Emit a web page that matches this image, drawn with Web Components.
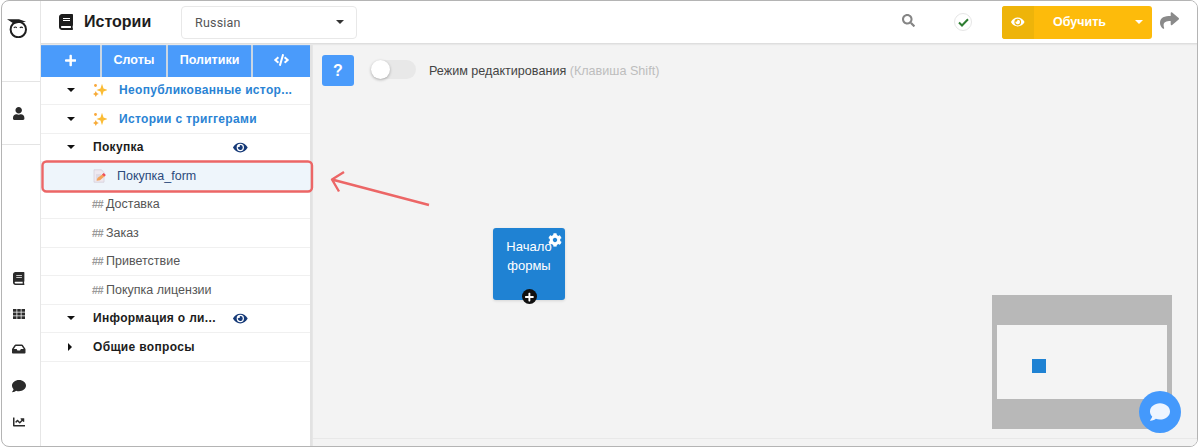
<!DOCTYPE html>
<html lang="ru">
<head>
<meta charset="utf-8">
<title>Истории</title>
<style>
  html, body { margin: 0; height: 100%; background: #fff; }
  body { font-family: "Liberation Sans", Arial, sans-serif; }
</style>
</head>
<body>
<story-app>
  <app-rail slot="rail"></app-rail>
  <app-topbar slot="top"></app-topbar>
  <story-sidebar slot="side">
    <story-row kind="group" open sparkle accent>Неопубликованные истор...</story-row>
    <story-row kind="group" open sparkle accent>Истории с триггерами</story-row>
    <story-row kind="group" open eye>Покупка</story-row>
    <story-row kind="form">Покупка_form</story-row>
    <story-row kind="story">Доставка</story-row>
    <story-row kind="story">Заказ</story-row>
    <story-row kind="story">Приветствие</story-row>
    <story-row kind="story">Покупка лицензии</story-row>
    <story-row kind="group" open eye>Информация о ли...</story-row>
    <story-row kind="group">Общие вопросы</story-row>
  </story-sidebar>
  <story-canvas slot="main"></story-canvas>
</story-app>
<script>
// icon paths, all font-awesome shaped
const ICONS = {
  book: ['0 0 448 512', 'M448 360V24c0-13.3-10.7-24-24-24H96C43 0 0 43 0 96v320c0 53 43 96 96 96h328c13.3 0 24-10.7 24-24v-16c0-7.5-3.5-14.3-8.9-18.7-4.2-15.4-4.2-59.3 0-74.7 5.4-4.3 8.9-11.1 8.9-18.6zM128 134c0-3.3 2.7-6 6-6h212c3.3 0 6 2.7 6 6v20c0 3.3-2.7 6-6 6H134c-3.3 0-6-2.7-6-6v-20zm0 64c0-3.3 2.7-6 6-6h212c3.3 0 6 2.7 6 6v20c0 3.3-2.7 6-6 6H134c-3.3 0-6-2.7-6-6v-20zm253.4 250H96c-17.7 0-32-14.3-32-32 0-17.6 14.4-32 32-32h285.4c-1.9 17.1-1.9 46.9 0 64z'],
  eye: ['0 0 576 512', 'M572.52 241.4C518.29 135.59 410.93 64 288 64S57.68 135.64 3.48 241.41a32.35 32.35 0 0 0 0 29.19C57.71 376.41 165.07 448 288 448s230.32-71.64 284.52-177.41a32.35 32.35 0 0 0 0-29.19zM288 400a144 144 0 1 1 144-144 143.93 143.93 0 0 1-144 144zm0-240a95.31 95.31 0 0 0-25.31 3.79 47.85 47.85 0 0 1-66.9 66.9A95.78 95.78 0 1 0 288 160z'],
  search: ['0 0 512 512', 'M505 442.7L405.3 343c-4.5-4.5-10.6-7-17-7H372c27.6-35.3 44-79.7 44-128C416 93.1 322.9 0 208 0S0 93.1 0 208s93.1 208 208 208c48.3 0 92.7-16.4 128-44v16.3c0 6.4 2.5 12.5 7 17l99.7 99.7c9.4 9.4 24.6 9.4 33.9 0l28.3-28.3c9.4-9.4 9.4-24.6.1-34zM208 336c-70.7 0-128-57.2-128-128 0-70.7 57.2-128 128-128 70.7 0 128 57.2 128 128 0 70.7-57.2 128-128 128z'],
  user: ['0 0 448 512', 'M224 256c70.7 0 128-57.3 128-128S294.7 0 224 0 96 57.3 96 128s57.3 128 128 128zm89.6 32h-16.7c-22.2 10.2-46.9 16-72.9 16s-50.6-5.8-72.9-16h-16.7C60.2 288 0 348.2 0 422.4V464c0 26.5 21.5 48 48 48h352c26.5 0 48-21.5 48-48v-41.6c0-74.2-60.2-134.4-134.4-134.4z'],
  inbox: ['0 0 576 512', 'M567.938 243.908L462.25 85.374A48.003 48.003 0 0 0 422.311 64H153.689a48 48 0 0 0-39.938 21.374L8.062 243.908A47.994 47.994 0 0 0 0 270.533V400c0 26.51 21.49 48 48 48h480c26.51 0 48-21.49 48-48V270.533a47.994 47.994 0 0 0-8.062-26.625zM162.252 128h251.497l85.333 128H376l-32 64H232l-32-64H76.918l85.334-128z'],
  comment: ['0 0 512 512', 'M256 32C114.6 32 0 125.1 0 240c0 49.6 21.4 95 57 130.7C44.5 421.1 2.7 466 2.2 466.5c-2.2 2.3-2.8 5.7-1.5 8.7S4.8 480 8 480c66.3 0 116-31.8 140.6-51.4 32.7 12.3 69 19.4 107.4 19.4 141.4 0 256-93.1 256-208S397.4 32 256 32z'],
  chart: ['0 0 512 512', 'M496 384H64V80c0-8.84-7.16-16-16-16H16C7.16 64 0 71.16 0 80v336c0 17.67 14.33 32 32 32h464c8.84 0 16-7.16 16-16v-32c0-8.84-7.16-16-16-16zM464 96H345.94c-21.38 0-32.09 25.85-16.97 40.97l32.4 32.4L288 242.75l-73.37-73.37c-12.5-12.5-32.76-12.5-45.25 0l-68.69 68.69c-6.25 6.25-6.25 16.38 0 22.63l22.62 22.62c6.25 6.25 16.38 6.25 22.63 0L192 237.25l73.37 73.37c12.5 12.5 32.76 12.5 45.25 0l96-96 32.4 32.4c15.12 15.12 40.97 4.41 40.97-16.97V112c.01-8.84-7.15-16-15.99-16z'],
  cog: ['0 0 512 512', 'M487.4 315.7l-42.6-24.6c4.3-23.2 4.3-47 0-70.2l42.6-24.6c4.9-2.8 7.1-8.6 5.5-14-11.1-35.6-30-67.8-54.7-94.6-3.8-4.1-10-5.1-14.8-2.3L380.8 110c-17.9-15.4-38.5-27.3-60.8-35.1V25.8c0-5.6-3.9-10.5-9.4-11.7-36.7-8.2-74.3-7.8-109.2 0-5.5 1.2-9.4 6.1-9.4 11.7V75c-22.2 7.9-42.8 19.8-60.8 35.1L88.7 85.5c-4.9-2.8-11-1.9-14.8 2.3-24.7 26.7-43.6 58.9-54.7 94.6-1.7 5.4.6 11.2 5.5 14L67.3 221c-4.3 23.2-4.3 47 0 70.2l-42.6 24.6c-4.9 2.8-7.1 8.6-5.5 14 11.1 35.6 30 67.8 54.7 94.6 3.8 4.1 10 5.1 14.8 2.3l42.6-24.6c17.9 15.4 38.5 27.3 60.8 35.1v49.2c0 5.6 3.9 10.5 9.4 11.7 36.7 8.2 74.3 7.8 109.2 0 5.5-1.2 9.4-6.1 9.4-11.7v-49.2c22.2-7.9 42.8-19.8 60.8-35.1l42.6 24.6c4.9 2.8 11 1.9 14.8-2.3 24.7-26.7 43.6-58.9 54.7-94.6 1.5-5.5-.7-11.3-5.6-14.1zM256 336c-44.1 0-80-35.9-80-80s35.9-80 80-80 80 35.9 80 80-35.9 80-80 80z'],
  share: ['0 0 512 512', 'M503.691 189.836L327.687 37.851C312.281 24.546 288 35.347 288 56.015v80.053C127.371 137.907 0 170.1 0 322.326c0 61.441 39.581 122.309 83.333 154.132 13.653 9.931 33.111-2.533 28.077-18.631C66.066 312.814 132.917 274.316 288 272.085V360c0 20.7 24.3 31.453 39.687 18.164l176.004-152c11.071-9.562 11.086-26.753 0-36.328z'],
  plus: ['0 0 448 512', 'M416 208H272V64c0-17.67-14.33-32-32-32h-32c-17.67 0-32 14.33-32 32v144H32c-17.67 0-32 14.33-32 32v32c0 17.67 14.33 32 32 32h144v144c0 17.67 14.33 32 32 32h32c17.67 0 32-14.33 32-32V304h144c17.67 0 32-14.33 32-32v-32c0-17.67-14.33-32-32-32z'],
  code: ['0 0 640 512', 'M278.9 511.5l-61-17.7c-6.4-1.8-10-8.5-8.2-14.9L346.2 8.7c1.8-6.4 8.5-10.1 14.9-8.2l61 17.7c6.4 1.8 10 8.5 8.2 14.9L293.8 503.3c-1.9 6.4-8.5 10.1-14.9 8.2zm-114-112.2l43.5-46.4c4.6-4.9 4.3-12.7-.8-17.2L117 256l90.6-79.7c5.1-4.5 5.5-12.3.8-17.2l-43.5-46.4c-4.5-4.8-12.1-5.1-17-.5L3.8 247.2c-5.1 4.7-5.1 12.8 0 17.5l144.1 135.1c4.9 4.6 12.5 4.4 17-.5zm327.2.6l144.1-135.1c5.1-4.7 5.1-12.8 0-17.5L492.1 112.1c-4.8-4.5-12.4-4.3-17 .5L431.6 159c-4.6 4.9-4.3 12.7.8 17.2L523 256l-90.6 79.7c-5.1 4.5-5.5 12.3-.8 17.2l43.5 46.4c4.5 4.9 12.1 5.1 17 .6z'],
  grid: ['0 0 512 512', 'M0 40h150v120H0zM181 40h150v120H181zM362 40h150v120H362zM0 196h150v120H0zM181 196h150v120H181zM362 196h150v120H362zM0 352h150v120H0zM181 352h150v120H181zM362 352h150v120H362z'],
};

class AppIcon extends HTMLElement {
  connectedCallback() {
    const [box, d] = ICONS[this.getAttribute('name')];
    const size = this.getAttribute('size') || 14;
    this.attachShadow({ mode: 'open' }).innerHTML = `
      <style>
        :host { display: inline-flex; line-height: 0; color: inherit; }
        svg { height: ${size}px; width: auto; display: block; fill: currentColor; }
      </style>
      <svg viewBox="${box}"><path d="${d}"/></svg>`;
  }
}
customElements.define('app-icon', AppIcon);

class StoryApp extends HTMLElement {
  constructor() {
    super();
    this.attachShadow({ mode: 'open' }).innerHTML = `
      <style>
        :host {
          display: block;
          margin-left: 1px;
          width: 1197px;
          height: 447px;
          box-sizing: border-box;
          border: 1px solid #b4b4b4;
          border-radius: 8px;
          overflow: hidden;
          position: relative;
          background: #fff;
        }
        .layout {
          display: grid;
          grid-template-columns: 39px 271px 1fr;
          grid-template-rows: 43px 1fr;
          height: 100%;
        }
        ::slotted([slot="rail"]) { grid-row: 1 / 3; }
        ::slotted([slot="top"]) { grid-column: 2 / 4; }
      </style>
      <div class="layout">
        <slot name="rail"></slot>
        <slot name="top"></slot>
        <slot name="side"></slot>
        <slot name="main"></slot>
      </div>
      <svg style="position:absolute;left:-2px;top:-1px;pointer-events:none" width="1198" height="447" fill="none" stroke="#ec6666" stroke-width="2.4">
        <rect x="42.5" y="161.5" width="269.5" height="30" rx="4"/>
        <path d="M429 205L332 179.5M344 172L332 179.5L339 191.5" stroke-linejoin="round"/>
      </svg>`;
  }
}
customElements.define('story-app', StoryApp);

class AppRail extends HTMLElement {
  constructor() {
    super();
    this.attachShadow({ mode: 'open' }).innerHTML = `
      <style>
        :host {
          display: flex;
          flex-direction: column;
          align-items: stretch;
          border-right: 1px solid #e6e6e6;
          color: #2b2b2b;
        }
        .logo { height: 81px; box-sizing: border-box; padding: 17px 0 0 5px; border-bottom: 1px solid #e4e4e4; }
        .user { height: 63px; box-sizing: border-box; display: flex; align-items: center; justify-content: center; border-bottom: 1px solid #e4e4e4; padding-right: 4px; }
        .bottom { margin-top: auto; display: flex; flex-direction: column; align-items: center; gap: 23.3px; padding: 0 4px 18px 0; }
        svg { display: block; }
      </style>
      <div class="logo">
        <svg width="21" height="20" viewBox="0 0 21 20" fill="none" stroke="#1f1f1f">
          <circle cx="11.300" cy="11.500" r="7.700" stroke-width="2"/>
          <path d="M0 1.200h12l7 2.500-12 2z" fill="#1f1f1f" stroke="none"/>
          <path d="M6.800 9.800q1.500-1.500 3 0M12.800 9.800q1.500-1.500 3 0" stroke-width="1.100"/>
        </svg>
      </div>
      <div class="user"><app-icon name="user" size="13"></app-icon></div>
      <div class="bottom">
        <app-icon name="book" size="13"></app-icon>
        <app-icon name="grid" size="12"></app-icon>
        <app-icon name="inbox" size="12"></app-icon>
        <app-icon name="comment" size="14"></app-icon>
        <app-icon name="chart" size="12"></app-icon>
      </div>`;
  }
}
customElements.define('app-rail', AppRail);

class AppTopbar extends HTMLElement {
  constructor() {
    super();
    this.attachShadow({ mode: 'open' }).innerHTML = `
      <style>
        :host {
          display: flex;
          align-items: center;
          height: 43px;
          box-sizing: border-box;
          border-bottom: 1px solid #dedede;
          box-shadow: 0 1px 1px #e8e8e8;
          z-index: 2;
          background: #fff;
          padding-left: 18px;
        }
        .title { display: flex; align-items: center; gap: 11px; width: 122px; color: #1d1d1d; font: 700 16px "Liberation Sans", Arial, sans-serif; }
        .select {
          width: 176px; height: 33px; box-sizing: border-box;
          border: 1px solid #e8e8e8; border-radius: 4px;
          display: flex; align-items: center; justify-content: space-between;
          padding: 0 12px 0 13px;
          font: 400 12.5px Roboto, sans-serif; letter-spacing: .2px; color: #555;
        }
        .caret { width: 0; height: 0; border: 4px solid transparent; border-top-color: #333; border-bottom: 0; }
        .tools { margin-left: auto; display: flex; align-items: center; }
        .search { color: #858585; margin-right: 39px; }
        .check {
          width: 18px; height: 18px; border-radius: 50%; border: 1px solid #e6e6e6;
          display: flex; align-items: center; justify-content: center; margin-right: 30px; box-sizing: border-box;
        }
        .train {
          width: 150px; height: 33px; border-radius: 3px; overflow: hidden;
          display: flex; align-items: center; background: #fdbb0b; color: #fff;
          font: 700 12.5px "Liberation Sans", Arial, sans-serif;
        }
        .train .view { width: 32px; height: 100%; background: #eeb40a; display: flex; align-items: center; justify-content: center; }
        .train .label { flex: 1; text-align: center; padding-right: 2px; }
        .train .caret { border-top-color: #fff; margin-right: 9px; margin-left: 8px; }
        .share { color: #8a8a8a; margin: 0 18px 0 8px; }
      </style>
      <div class="title"><app-icon name="book" size="16"></app-icon><span>Истории</span></div>
      <div class="select"><span>Russian</span><i class="caret"></i></div>
      <div class="tools">
        <span class="search"><app-icon name="search" size="13"></app-icon></span>
        <span class="check">
          <svg width="11" height="9" viewBox="0 0 11 9" fill="none" stroke="#2e7d32" stroke-width="2"><path d="M1 4.500L4 7.500 10 1.200"/></svg>
        </span>
        <div class="train">
          <span class="view"><app-icon name="eye" size="12"></app-icon></span>
          <span class="label">Обучить</span>
          <i class="caret"></i>
        </div>
        <span class="share"><app-icon name="share" size="19"></app-icon></span>
      </div>`;
  }
}
customElements.define('app-topbar', AppTopbar);

class StorySidebar extends HTMLElement {
  constructor() {
    super();
    this.attachShadow({ mode: 'open' }).innerHTML = `
      <style>
        :host {
          display: flex;
          flex-direction: column;
          border-right: 2px solid #e2e2e2;
          background: #fff;
          min-height: 0;
        }
        .tools {
          display: grid;
          grid-template-columns: 61px 66px 85px 1fr;
          height: 32.7px;
          flex: none;
        }
        .tools span {
          background: #4a9bfb;
          color: #fff;
          border-right: 2px solid #c9d6e4;
          display: flex; align-items: center; justify-content: center;
          font: 700 12.5px "Liberation Sans", Arial, sans-serif;
        }
        .tools span:last-child { border-right: 0; }
      </style>
      <div class="tools">
        <span><app-icon name="plus" size="13"></app-icon></span>
        <span>Слоты</span>
        <span>Политики</span>
        <span><app-icon name="code" size="12"></app-icon></span>
      </div>
      <slot></slot>`;
  }
}
customElements.define('story-sidebar', StorySidebar);

class StoryRow extends HTMLElement {
  connectedCallback() {
    const kind = this.getAttribute('kind');
    const open = this.hasAttribute('open');
    const sparkle = this.hasAttribute('sparkle');
    let lead = '';
    if (kind === 'group') {
      lead = `<i class="${open ? 'down' : 'right'}"></i>`;
      if (sparkle) lead += `<svg class="spark" width="14" height="14" viewBox="0 0 14 14" fill="#fbbc35"><path d="M9 .8l1.500 4.700L14.500 7l-4 1.500L9 13.200 7.500 8.500 3.500 7l4-1.500z"/><circle cx="2.500" cy="2.500" r="1.400" fill="#f9a83a"/><path d="M2.800 8l1 2 2 1-2 1-1 2-1-2-2-1 2-1z" fill="#f7ab38"/></svg>`;
    } else if (kind === 'form') {
      lead = `<svg class="doc" width="14" height="14" viewBox="0 0 14 14"><path d="M1 .8h7.500L11 3.500v9.700H1z" fill="#eee9f0" stroke="#d6d0dc" stroke-width=".8"/><path d="M3 6h5M3 8h4M3 10h3" stroke="#c9c2d0" stroke-width=".8"/><path d="M3.500 11.800l1-2.800 6-4.500 2 2-5.500 4.700z" fill="#f5a35a"/><path d="M9 5.500l1.800-1.500 2 2-1.500 1.500z" fill="#ee4f5f"/></svg>`;
    } else {
      lead = `<span class="hash">##</span>`;
    }
    this.attachShadow({ mode: 'open' }).innerHTML = `
      <style>
        :host {
          display: flex;
          align-items: center;
          height: 28.5px;
          box-sizing: border-box;
          border-bottom: 1px solid #f0f0f0;
          font: 400 12.5px "Liberation Sans", Arial, sans-serif;
          color: #555;
          white-space: nowrap;
          flex: none;
          position: relative;
        }
        :host([kind="group"]) { padding-left: 26px; font-size: 12px; font-weight: 700; color: #1c1c1c; letter-spacing: .33px; }
        :host([accent]) { color: #2a83d4; }
        :host([kind="form"]) { padding-left: 52px; background: #eef5fb; color: #2c4a7c; }
        :host([kind="story"]) { padding-left: 51px; }
        .lead { display: flex; align-items: center; flex: none; }
        :host([kind="group"]) .lead { width: 26px; }
        :host([sparkle]) .lead { width: 52px; }
        :host([kind="form"]) .lead { width: 24px; }
        .down { width: 0; height: 0; border: 4px solid transparent; border-top-color: #111; border-bottom: 0; }
        .right { width: 0; height: 0; margin-left: 1px; border: 4px solid transparent; border-left-color: #111; border-right: 0; }
        .spark { margin-left: 18px; }
        .hash { color: #999; font-size: 11px; font-weight: 700; letter-spacing: -.6px; width: 14px; }
        .eye { position: absolute; left: 192px; color: #163a78; display: flex; }
      </style>
      <span class="lead">${lead}</span><span><slot></slot></span>
      ${this.hasAttribute('eye') ? '<span class="eye"><app-icon name="eye" size="13"></app-icon></span>' : ''}`;
  }
}
customElements.define('story-row', StoryRow);

class StoryCanvas extends HTMLElement {
  constructor() {
    super();
    this.attachShadow({ mode: 'open' }).innerHTML = `
      <style>
        :host { display: block; position: relative; background: #f3f3f3; overflow: hidden; border-left: 1px solid #e6e6e6; }
        .bar { display: flex; align-items: center; padding: 11px 0 0 9px; }
        .help {
          width: 32px; height: 31px; border-radius: 3px; background: #4a9bfb; color: #fff;
          display: flex; align-items: center; justify-content: center;
          font: 700 16px "Liberation Sans", Arial, sans-serif;
        }
        .toggle { width: 45px; height: 19px; border-radius: 10px; background: #e8e8e8; margin: 0 13px 0 17px; position: relative; transform: translateY(-1px); }
        .toggle i { position: absolute; left: 0; top: 0; width: 19px; height: 19px; border-radius: 50%; background: #fff; box-shadow: 0 1px 3px rgba(0,0,0,.3); }
        .mode { font: 400 12.6px "Liberation Sans", Arial, sans-serif; color: #444; }
        .mode em { font-style: normal; color: #bdbdbd; }
        .node {
          position: absolute; left: 180px; top: 184px; width: 72px; height: 72px;
          background: #1f82d3; border-radius: 3px; color: #fff; box-shadow: 0 1px 3px rgba(0,0,0,.12);
          font: 400 13px/19px "Liberation Sans", Arial, sans-serif; text-align: center;
          box-sizing: border-box; padding-top: 9px;
        }
        .node .cog { position: absolute; right: 3px; top: 5px; }
        .node .add {
          position: absolute; left: 29px; top: 61px; width: 15px; height: 15px; border-radius: 50%;
          background: #111; display: flex; align-items: center; justify-content: center;
        }
        .map { position: absolute; left: 679px; top: 251px; width: 180px; height: 134px; background: #b8b8b8; }
        .map .view { position: absolute; left: 5px; top: 30px; width: 170px; height: 74px; background: #f4f4f4; }
        .map .dot { position: absolute; left: 35px; top: 34px; width: 14px; height: 14px; background: #1f82d3; }
        .chat {
          position: absolute; left: 826px; top: 347px; width: 42px; height: 42px; border-radius: 50%;
          background: #4499fc; color: #eef5ff; display: flex; align-items: center; justify-content: center;
        }
        .foot { position: absolute; left: 0; right: 0; bottom: 7px; height: 1px; background: #e8e8e8; }
      </style>
      <div class="bar">
        <span class="help">?</span>
        <span class="toggle"><i></i></span>
        <span class="mode">Режим редактирования <em>(Клавиша Shift)</em></span>
      </div>
      <div class="node">Начало<br>формы
        <span class="cog"><app-icon name="cog" size="14"></app-icon></span>
        <span class="add"><app-icon name="plus" size="10"></app-icon></span>
      </div>
      <div class="map"><div class="view"><div class="dot"></div></div></div>
      <div class="foot"></div>
      <div class="chat"><app-icon name="comment" size="20"></app-icon></div>`;
  }
}
customElements.define('story-canvas', StoryCanvas);
</script>
</body>
</html>
